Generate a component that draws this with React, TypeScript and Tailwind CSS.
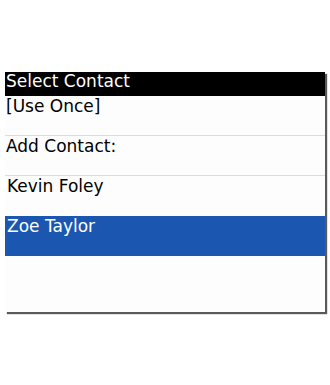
import React from "react";

const rows = [
    { label: "[Use Once]", indent: false, divider: true },
    { label: "Add Contact:", indent: false, divider: true },
    { label: "Kevin Foley", indent: true, divider: false },
];

export default function App() {
    return (
        <div
            className="w-[330px] h-[385px] bg-white pt-[72px] pl-[5px]"
            style={{ fontFamily: '"DejaVu Sans", sans-serif' }}
        >
            <div className="w-[320px] h-[240px] bg-[#fdfdfd] shadow-[2px_2px_1px_rgba(60,60,60,0.85)]">
                <div className="h-[24px] bg-black text-white text-[17px] leading-[18px] pl-[1px]">
                    Select Contact
                </div>

                {rows.map((r) => (
                    <div
                        key={r.label}
                        className={`h-[40px] pt-[1px] text-[17px] leading-[18px] text-black ${
                            r.divider ? "border-b border-[#dcdcdc]" : ""
                        } ${r.indent ? "pl-[2px]" : "pl-[1px]"}`}
                    >
                        {r.label}
                    </div>
                ))}

                <div className="h-[40px] bg-[#1b57b1] text-white text-[17px] leading-[18px] pt-[1px] pl-[2px]">
                    Zoe Taylor
                </div>
            </div>
        </div>
    );
}
